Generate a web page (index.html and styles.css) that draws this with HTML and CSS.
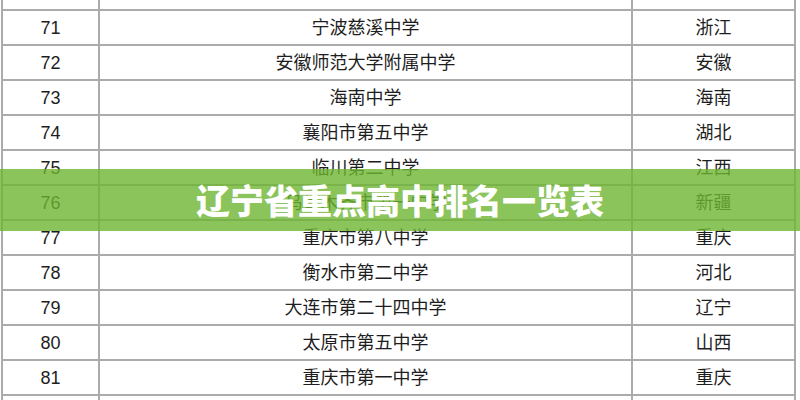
FILE: index.html
```html
<!DOCTYPE html>
<html lang="zh-CN">
<head>
<meta charset="utf-8">
<title>辽宁省重点高中排名一览表</title>
<link rel="stylesheet" href="styles.css">
</head>
<body>
<div class="viewport">
  <table class="rank">
    <colgroup>
      <col class="c-no">
      <col class="c-name">
      <col class="c-prov">
    </colgroup>
    <tbody>
      <tr><td></td><td></td><td></td></tr>
      <tr><td>71</td><td>宁波慈溪中学</td><td>浙江</td></tr>
      <tr><td>72</td><td>安徽师范大学附属中学</td><td>安徽</td></tr>
      <tr><td>73</td><td>海南中学</td><td>海南</td></tr>
      <tr><td>74</td><td>襄阳市第五中学</td><td>湖北</td></tr>
      <tr><td>75</td><td>临川第二中学</td><td>江西</td></tr>
      <tr><td>76</td><td>乌鲁木齐市第一中学</td><td>新疆</td></tr>
      <tr><td>77</td><td>重庆市第八中学</td><td>重庆</td></tr>
      <tr><td>78</td><td>衡水市第二中学</td><td>河北</td></tr>
      <tr><td>79</td><td>大连市第二十四中学</td><td>辽宁</td></tr>
      <tr><td>80</td><td>太原市第五中学</td><td>山西</td></tr>
      <tr><td>81</td><td>重庆市第一中学</td><td>重庆</td></tr>
      <tr><td></td><td></td><td></td></tr>
    </tbody>
  </table>
  <div class="banner">辽宁省重点高中排名一览表</div>
</div>
</body>
</html>
```
FILE: styles.css
```css
html, body {
  margin: 0;
  padding: 0;
  background: #ffffff;
}

.viewport {
  position: relative;
  width: 800px;
  height: 400px;
  overflow: hidden;
  background: #ffffff;
}

.rank {
  border-collapse: collapse;
  table-layout: fixed;
  width: 793px;
  margin: -26px 0 0 1px;
  font-family: "Liberation Sans", "Noto Sans CJK SC", sans-serif;
  font-size: 18px;
  color: #1e1e1e;
}

.c-no { width: 97px; }
.c-name { width: 533px; }
.c-prov { width: 163px; }

.rank tr {
  height: 35px;
}

.rank td {
  border: 2px solid #ababab;
  padding: 0;
  text-align: center;
  vertical-align: middle;
  line-height: 20px;
}

.banner {
  position: absolute;
  left: 0;
  top: 169px;
  width: 800px;
  height: 62px;
  background: rgba(110, 181, 49, 0.8);
  color: #ffffff;
  font-family: "Noto Sans CJK SC", sans-serif;
  font-weight: 900;
  font-size: 34px;
  line-height: 62px;
  text-align: center;
}
```
